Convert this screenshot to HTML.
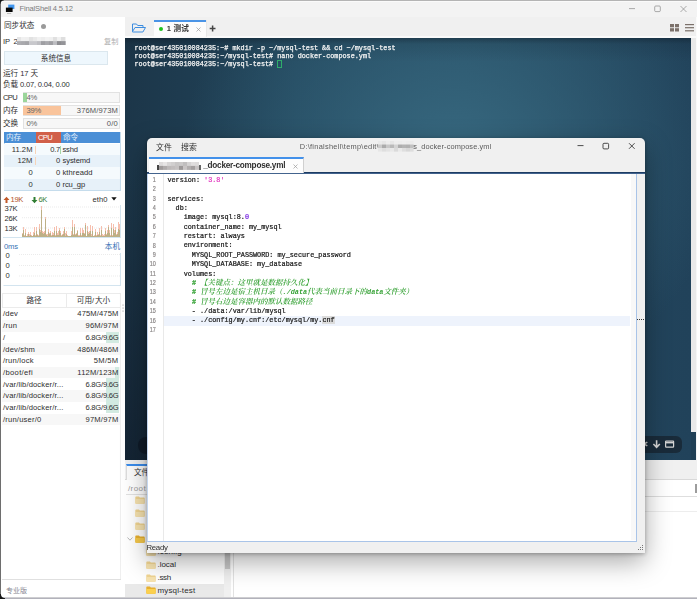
<!DOCTYPE html>
<html lang="zh-CN">
<head>
<meta charset="utf-8">
<title>FinalShell 4.5.12</title>
<style>
*{box-sizing:border-box;margin:0;padding:0}
html,body{width:697px;height:599px;overflow:hidden;background:#f0f0f0}
#app{position:absolute;left:0;top:0;width:697px;height:599px;overflow:hidden;filter:blur(0.3px)}
body{position:relative;font-family:"Liberation Sans","Noto Sans CJK SC",sans-serif;font-size:7.6px;color:#2e2e2e;line-height:1}
.a{position:absolute}
.t{position:absolute;white-space:nowrap;line-height:10px;height:10px;font-size:7.6px}
#term{left:125px;top:38px;width:566px;height:422px;overflow:hidden;background:
 linear-gradient(180deg,rgba(10,20,30,.4) 0,rgba(10,20,30,.12) 6px,rgba(10,20,30,0) 24px),
 radial-gradient(ellipse 270px 250px at 58% 28%, #37687f 0%, rgba(55,104,127,0) 100%),
 radial-gradient(ellipse 420px 300px at 0% 100%, rgba(16,28,42,.7) 0%, rgba(16,28,42,0) 100%),
 linear-gradient(90deg,#1c3649 0%,#22465c 30%,#254b62 60%,#21425a 100%);}
#term pre{position:absolute;left:9.5px;top:6.2px;font-family:"Liberation Mono",monospace;font-size:6.8px;line-height:8.05px;color:#f4f4f4;font-weight:normal;-webkit-text-stroke:0.25px #f4f4f4}
#dlg{left:147px;top:138px;width:498px;height:415px;background:#f0f0f0;border-radius:5px 5px 0 0;box-shadow:0 9px 26px rgba(0,0,0,.34),0 1px 4px rgba(0,0,0,.3)}
#ed{left:-0.3px;top:36.2px;width:490.3px;height:367.8px;background:#fff;border:1px solid #a9c4e8;border-top:0;border-left-color:#c3d6ef}
#code{position:absolute;left:19.7px;top:1.6px;font-family:"Liberation Mono",monospace;font-size:6.8px;line-height:9.375px;color:#1a1a1a;white-space:pre;-webkit-text-stroke:0.22px}
#code .ln{height:9.375px;line-height:9.375px;white-space:pre}
#code i{font-family:"Liberation Mono","Noto Serif CJK SC",serif;font-style:italic;font-weight:600;color:#36a236;font-size:7.5px;line-height:0;vertical-align:baseline;-webkit-text-stroke:0}
#code i b{font-family:"Liberation Mono",monospace;font-size:6.8px;font-weight:bold;font-style:italic}
#code .s{color:#e23ac0}
#code .n{color:#7a2be2}
#code .g{color:#36a236;font-weight:bold}
#code .h{background:#dcdcdc}
#nums{position:absolute;left:0;top:0.7px;width:7.7px;-webkit-text-stroke:0.2px #8a8686;text-align:right;font-family:"Liberation Sans",sans-serif;font-size:6.8px;line-height:9.375px;color:#8a8686;white-space:pre;transform:scaleX(.8);transform-origin:100% 0}
.bar{position:absolute;left:23px;width:97px;height:10.5px;background:#f7f7f7;border:1px solid #e2e2e2}
.prow{position:absolute;left:4px;width:116px;height:11.7px}
.drow{position:absolute;left:2px;width:118px;height:11.7px}
</style>
</head>
<body>
<div id="app">
<div class="a" style="left:0;top:0;width:697px;height:17px;background:#f3f3f3"></div>
<div class="a" style="left:0;top:0;width:697px;height:1px;background:#b4b4b4"></div>
<div class="a" style="left:0;top:1px;width:697px;height:1px;background:#fafafa"></div>
<svg class="a" style="left:5px;top:4px" width="11" height="11" viewBox="0 0 11 11"><rect x="3.2" y="0.6" width="6.2" height="4.4" fill="#3f95ee"/><rect x="0.9" y="3.6" width="6.7" height="4.4" fill="#050505"/><rect x="2" y="9" width="4.2" height="0.6" fill="#999"/></svg>
<svg class="a" style="left:625px;top:3px" width="66" height="12" viewBox="0 0 66 12" fill="none" stroke="#777" stroke-width="0.6"><path d="M4 5.6h6"/><rect x="29.7" y="3" width="5.6" height="5.6" rx="1"/><path d="M55.5 3l6 6M61.5 3l-6 6"/></svg>

<div class="t" style="top:3.5px;left:19.5px;color:#7c7c7c;"><span style="letter-spacing:-0.19px">FinalShell 4.5.12</span></div>
<div class="a" style="left:1px;top:17px;width:124px;height:582px;background:#fff"></div>
<div class="t" style="top:21px;left:4px;color:#333;">同步状态</div>
<div class="a" style="left:40.5px;top:23.5px;width:5px;height:5px;border-radius:50%;background:#9a9a9a"></div>
<div class="t" style="top:36.5px;left:3px;white-space:pre;"><span style="letter-spacing:-0.19px">IP  2</span></div>
<svg class="a" style="left:17.3px;top:36.5px;filter:blur(0.35px)" width="48.7" height="8.2" viewBox="0 0 48.7 8.2"><rect x="0.0" y="0.0" width="4.1" height="4.2" fill="rgb(229,229,229)"/><rect x="4.0" y="0.0" width="4.1" height="4.2" fill="rgb(240,240,240)"/><rect x="8.0" y="0.0" width="4.1" height="4.2" fill="rgb(239,239,239)"/><rect x="12.0" y="0.0" width="4.1" height="4.2" fill="rgb(226,226,226)"/><rect x="16.0" y="0.0" width="4.1" height="4.2" fill="rgb(233,233,233)"/><rect x="20.0" y="0.0" width="4.1" height="4.2" fill="rgb(241,241,241)"/><rect x="24.0" y="0.0" width="4.1" height="4.2" fill="rgb(237,237,237)"/><rect x="28.0" y="0.0" width="4.1" height="4.2" fill="rgb(242,242,242)"/><rect x="32.0" y="0.0" width="4.1" height="4.2" fill="rgb(240,240,240)"/><rect x="36.0" y="0.0" width="4.1" height="4.2" fill="rgb(224,224,224)"/><rect x="40.0" y="0.0" width="4.1" height="4.2" fill="rgb(241,241,241)"/><rect x="44.0" y="0.0" width="4.1" height="4.2" fill="rgb(222,222,222)"/><rect x="48.0" y="0.0" width="0.8" height="4.2" fill="rgb(237,237,237)"/><rect x="0.0" y="4.1" width="4.1" height="4.2" fill="rgb(173,173,177)"/><rect x="4.0" y="4.1" width="4.1" height="4.2" fill="rgb(169,169,173)"/><rect x="8.0" y="4.1" width="4.1" height="4.2" fill="rgb(164,164,168)"/><rect x="12.0" y="4.1" width="4.1" height="4.2" fill="rgb(200,200,204)"/><rect x="16.0" y="4.1" width="4.1" height="4.2" fill="rgb(200,200,204)"/><rect x="20.0" y="4.1" width="4.1" height="4.2" fill="rgb(190,190,194)"/><rect x="24.0" y="4.1" width="4.1" height="4.2" fill="rgb(159,159,163)"/><rect x="28.0" y="4.1" width="4.1" height="4.2" fill="rgb(169,169,173)"/><rect x="32.0" y="4.1" width="4.1" height="4.2" fill="rgb(159,159,163)"/><rect x="36.0" y="4.1" width="4.1" height="4.2" fill="rgb(189,189,193)"/><rect x="40.0" y="4.1" width="4.1" height="4.2" fill="rgb(141,141,145)"/><rect x="44.0" y="4.1" width="4.1" height="4.2" fill="rgb(148,148,152)"/><rect x="48.0" y="4.1" width="0.8" height="4.2" fill="rgb(160,160,164)"/></svg>
<div class="t" style="top:36.5px;left:90.5px;width:28px;text-align:right;font-size:7.2px;color:#b0b0b0;">复制</div>
<div class="a" style="left:4px;top:51px;width:104px;height:13.5px;background:#eef7fd;border:1px solid #dbe7ee"></div>
<div class="t" style="top:53.5px;left:4px;width:104px;text-align:center;">系统信息</div>
<div class="t" style="top:68.5px;left:3px;">运行<span style="letter-spacing:-0.08px"> 17 </span>天</div>
<div class="t" style="top:79.5px;left:3px;">负载<span style="letter-spacing:-0.21px"> 0.07, 0.04, 0.00</span></div>
<div class="t" style="top:92.5px;left:3px;"><span style="letter-spacing:-0.62px">CPU</span></div>
<div class="bar" style="top:92px"><div class="a" style="left:-0.7px;top:0;width:3.6px;height:8.5px;background:#9bd69b"></div></div>
<div class="t" style="top:92.5px;left:26.5px;color:#666;"><span style="letter-spacing:-0.33px">4%</span></div>
<div class="t" style="top:105.5px;left:3px;">内存</div>
<div class="bar" style="top:105px"><div class="a" style="left:-0.7px;top:0;width:37.7px;height:8.5px;background:#f9c49c"></div></div>
<div class="t" style="top:105.5px;left:26.5px;color:#666;"><span style="letter-spacing:-0.27px">39%</span></div>
<div class="t" style="top:105.5px;left:60px;width:58px;text-align:right;color:#555;"><span style="letter-spacing:0.12px">376M/973M</span></div>
<div class="t" style="top:118.5px;left:3px;">交换</div>
<div class="bar" style="top:118px"></div>
<div class="t" style="top:118.5px;left:26.5px;color:#666;"><span style="letter-spacing:-0.33px">0%</span></div>
<div class="t" style="top:118.5px;left:60px;width:58px;text-align:right;color:#555;"><span style="letter-spacing:0.20px">0/0</span></div>
<div class="a" style="left:3.5px;top:131.5px;width:117px;height:59.5px;border:1px solid #c5dcec;background:#fff"></div>
<div class="a" style="left:4px;top:132px;width:116px;height:11px;background:#4b8fd6"></div>
<div class="a" style="left:36px;top:132px;width:25px;height:11px;background:#d1604a"></div>
<div class="t" style="top:132.5px;left:6px;color:#e6f0fb;">内存</div>
<div class="t" style="top:132.5px;left:38px;color:#fff;"><span style="letter-spacing:-0.62px">CPU</span></div>
<div class="t" style="top:132.5px;left:63px;color:#e6f0fb;">命令</div>
<div class="a" style="left:4px;top:143.5px;width:116px;height:11.7px;background:#f5fafd"></div>
<div class="t" style="top:144.5px;left:4.5px;width:28px;text-align:right;"><span style="letter-spacing:0.04px">11.2M</span></div>
<div class="t" style="top:144.5px;left:34px;width:26px;text-align:right;"><span style="letter-spacing:-0.24px">0.7</span></div>
<div class="t" style="top:144.5px;left:62.5px;"><span style="letter-spacing:-0.21px">sshd</span></div>
<div class="a" style="left:4px;top:155.2px;width:116px;height:11.7px;background:#e7f1f9"></div>
<div class="t" style="top:156.0px;left:4.5px;width:28px;text-align:right;"><span style="letter-spacing:0.08px">12M</span></div>
<div class="t" style="top:156.0px;left:34px;width:26px;text-align:right;"><span style="letter-spacing:-0.13px">0</span></div>
<div class="t" style="top:156.0px;left:62.5px;"><span style="letter-spacing:-0.09px">systemd</span></div>
<div class="a" style="left:4px;top:166.9px;width:116px;height:11.7px;background:#f5fafd"></div>
<div class="t" style="top:168.0px;left:4.5px;width:28px;text-align:right;"><span style="letter-spacing:-0.13px">0</span></div>
<div class="t" style="top:168.0px;left:34px;width:26px;text-align:right;"><span style="letter-spacing:-0.13px">0</span></div>
<div class="t" style="top:168.0px;left:62.5px;"><span style="letter-spacing:0.06px">kthreadd</span></div>
<div class="a" style="left:4px;top:178.6px;width:116px;height:11.7px;background:#e7f1f9"></div>
<div class="t" style="top:179.5px;left:4.5px;width:28px;text-align:right;"><span style="letter-spacing:-0.13px">0</span></div>
<div class="t" style="top:179.5px;left:34px;width:26px;text-align:right;"><span style="letter-spacing:-0.13px">0</span></div>
<div class="t" style="top:179.5px;left:62.5px;"><span style="letter-spacing:-0.11px">rcu_gp</span></div>
<div class="a" style="left:35px;top:145.5px;width:1px;height:8px;background:#f5d3b8"></div>
<div class="a" style="left:35px;top:157px;width:1px;height:8px;background:#f5d3b8"></div>
<div class="a" style="left:60px;top:145.5px;width:1px;height:8px;background:#a6d6a6"></div>
<svg class="a" style="left:3px;top:195.5px" width="7" height="8" viewBox="0 0 7 8"><path d="M3.5 0.8L6.5 4H4.5V7H2.5V4H0.5Z" fill="#c25a2a"/></svg>
<div class="t" style="top:194.5px;left:10.5px;color:#b4532a;"><span style="letter-spacing:-0.31px">19K</span></div>
<svg class="a" style="left:31px;top:195.5px" width="7" height="8" viewBox="0 0 7 8"><path d="M3.5 7.2L6.5 4H4.5V1H2.5V4H0.5Z" fill="#2f7d32"/></svg>
<div class="t" style="top:194.5px;left:38.5px;color:#3a7d3a;"><span style="letter-spacing:-0.39px">6K</span></div>
<div class="t" style="top:194.5px;left:92.5px;"><span style="letter-spacing:0.04px">eth0</span></div>
<svg class="a" style="left:111px;top:197px" width="6" height="4" viewBox="0 0 6 4"><path d="M0.3 0.3H5.7L3 3.6Z" fill="#111"/></svg>
<svg class="a" style="left:3px;top:205px" width="118" height="33" viewBox="0 0 118 33"><rect x="0" y="32" width="117.5" height="1" fill="#d3e4ef"/><rect x="117" y="0" width="1" height="33" fill="#d3e4ef"/><line x1="19" y1="2" x2="117" y2="2" stroke="#cfcfcf" stroke-width="0.6" stroke-dasharray="0.7 1.3"/><line x1="19" y1="12.7" x2="117" y2="12.7" stroke="#cfcfcf" stroke-width="0.6" stroke-dasharray="0.7 1.3"/><line x1="19" y1="23" x2="117" y2="23" stroke="#cfcfcf" stroke-width="0.6" stroke-dasharray="0.7 1.3"/><rect x="19" y="28" width="1" height="4" fill="#f6bfae"/><rect x="19" y="29" width="1" height="3" fill="#bdb086"/><rect x="20" y="22" width="1" height="10" fill="#f6bfae"/><rect x="20" y="25" width="1" height="7" fill="#bdb086"/><rect x="21" y="30" width="1" height="2" fill="#f6bfae"/><rect x="21" y="31" width="1" height="1" fill="#bdb086"/><rect x="22" y="24" width="1" height="8" fill="#f6bfae"/><rect x="22" y="28" width="1" height="4" fill="#bdb086"/><rect x="23" y="31" width="1" height="1" fill="#f6bfae"/><rect x="23" y="31" width="1" height="1" fill="#bdb086"/><rect x="24" y="29" width="1" height="3" fill="#f6bfae"/><rect x="24" y="31" width="1" height="1" fill="#bdb086"/><rect x="25" y="27" width="1" height="5" fill="#f6bfae"/><rect x="25" y="29" width="1" height="3" fill="#bdb086"/><rect x="26" y="29" width="1" height="3" fill="#f6bfae"/><rect x="26" y="31" width="1" height="1" fill="#bdb086"/><rect x="27" y="27" width="1" height="5" fill="#f6bfae"/><rect x="27" y="30" width="1" height="2" fill="#bdb086"/><rect x="28" y="30" width="1" height="2" fill="#f6bfae"/><rect x="28" y="31" width="1" height="1" fill="#bdb086"/><rect x="29" y="31" width="1" height="1" fill="#f6bfae"/><rect x="29" y="31" width="1" height="1" fill="#bdb086"/><rect x="30" y="27" width="1" height="5" fill="#f6bfae"/><rect x="30" y="30" width="1" height="2" fill="#bdb086"/><rect x="31" y="22" width="1" height="10" fill="#f6bfae"/><rect x="31" y="28" width="1" height="4" fill="#bdb086"/><rect x="32" y="30" width="1" height="2" fill="#f6bfae"/><rect x="32" y="31" width="1" height="1" fill="#bdb086"/><rect x="33" y="22" width="1" height="10" fill="#f6bfae"/><rect x="33" y="26" width="1" height="6" fill="#bdb086"/><rect x="34" y="29" width="1" height="3" fill="#f6bfae"/><rect x="34" y="30" width="1" height="2" fill="#bdb086"/><rect x="35" y="30" width="1" height="2" fill="#f6bfae"/><rect x="35" y="31" width="1" height="1" fill="#bdb086"/><rect x="36" y="19" width="1" height="13" fill="#f6bfae"/><rect x="36" y="24" width="1" height="8" fill="#bdb086"/><rect x="37" y="25" width="1" height="7" fill="#f6bfae"/><rect x="37" y="27" width="1" height="5" fill="#bdb086"/><rect x="38" y="1" width="1" height="31" fill="#f6bfae"/><rect x="38" y="5" width="1" height="27" fill="#bdb086"/><rect x="39" y="26" width="1" height="6" fill="#f6bfae"/><rect x="39" y="28" width="1" height="4" fill="#bdb086"/><rect x="40" y="27" width="1" height="5" fill="#f6bfae"/><rect x="40" y="29" width="1" height="3" fill="#bdb086"/><rect x="41" y="26" width="1" height="6" fill="#f6bfae"/><rect x="41" y="28" width="1" height="4" fill="#bdb086"/><rect x="42" y="12" width="1" height="20" fill="#f6bfae"/><rect x="42" y="14" width="1" height="18" fill="#bdb086"/><rect x="43" y="29" width="1" height="3" fill="#f6bfae"/><rect x="43" y="30" width="1" height="2" fill="#bdb086"/><rect x="44" y="29" width="1" height="3" fill="#f6bfae"/><rect x="44" y="31" width="1" height="1" fill="#bdb086"/><rect x="45" y="24" width="1" height="8" fill="#f6bfae"/><rect x="45" y="27" width="1" height="5" fill="#bdb086"/><rect x="46" y="28" width="1" height="4" fill="#f6bfae"/><rect x="46" y="29" width="1" height="3" fill="#bdb086"/><rect x="47" y="26" width="1" height="6" fill="#f6bfae"/><rect x="47" y="28" width="1" height="4" fill="#bdb086"/><rect x="48" y="30" width="1" height="2" fill="#f6bfae"/><rect x="48" y="31" width="1" height="1" fill="#bdb086"/><rect x="49" y="27" width="1" height="5" fill="#f6bfae"/><rect x="49" y="30" width="1" height="2" fill="#bdb086"/><rect x="50" y="28" width="1" height="4" fill="#f6bfae"/><rect x="50" y="30" width="1" height="2" fill="#bdb086"/><rect x="51" y="22" width="1" height="10" fill="#f6bfae"/><rect x="51" y="26" width="1" height="6" fill="#bdb086"/><rect x="52" y="30" width="1" height="2" fill="#f6bfae"/><rect x="52" y="31" width="1" height="1" fill="#bdb086"/><rect x="53" y="21" width="1" height="11" fill="#f6bfae"/><rect x="53" y="26" width="1" height="6" fill="#bdb086"/><rect x="54" y="28" width="1" height="4" fill="#f6bfae"/><rect x="54" y="30" width="1" height="2" fill="#bdb086"/><rect x="55" y="26" width="1" height="6" fill="#f6bfae"/><rect x="55" y="30" width="1" height="2" fill="#bdb086"/><rect x="56" y="23" width="1" height="9" fill="#f6bfae"/><rect x="56" y="25" width="1" height="7" fill="#bdb086"/><rect x="57" y="26" width="1" height="6" fill="#f6bfae"/><rect x="57" y="28" width="1" height="4" fill="#bdb086"/><rect x="58" y="30" width="1" height="2" fill="#f6bfae"/><rect x="58" y="31" width="1" height="1" fill="#bdb086"/><rect x="59" y="29" width="1" height="3" fill="#f6bfae"/><rect x="59" y="30" width="1" height="2" fill="#bdb086"/><rect x="60" y="26" width="1" height="6" fill="#f6bfae"/><rect x="60" y="29" width="1" height="3" fill="#bdb086"/><rect x="61" y="22" width="1" height="10" fill="#f6bfae"/><rect x="61" y="24" width="1" height="8" fill="#bdb086"/><rect x="62" y="28" width="1" height="4" fill="#f6bfae"/><rect x="62" y="31" width="1" height="1" fill="#bdb086"/><rect x="63" y="26" width="1" height="6" fill="#f6bfae"/><rect x="63" y="29" width="1" height="3" fill="#bdb086"/><rect x="64" y="30" width="1" height="2" fill="#f6bfae"/><rect x="64" y="31" width="1" height="1" fill="#bdb086"/><rect x="65" y="31" width="1" height="1" fill="#f6bfae"/><rect x="65" y="31" width="1" height="1" fill="#bdb086"/><rect x="66" y="31" width="1" height="1" fill="#f6bfae"/><rect x="66" y="31" width="1" height="1" fill="#bdb086"/><rect x="67" y="31" width="1" height="1" fill="#f6bfae"/><rect x="67" y="31" width="1" height="1" fill="#bdb086"/><rect x="68" y="26" width="1" height="6" fill="#f6bfae"/><rect x="68" y="30" width="1" height="2" fill="#bdb086"/><rect x="69" y="15" width="1" height="17" fill="#f6bfae"/><rect x="69" y="22" width="1" height="10" fill="#bdb086"/><rect x="70" y="29" width="1" height="3" fill="#f6bfae"/><rect x="70" y="30" width="1" height="2" fill="#bdb086"/><rect x="71" y="19" width="1" height="13" fill="#f6bfae"/><rect x="71" y="22" width="1" height="10" fill="#bdb086"/><rect x="72" y="29" width="1" height="3" fill="#f6bfae"/><rect x="72" y="30" width="1" height="2" fill="#bdb086"/><rect x="73" y="28" width="1" height="4" fill="#f6bfae"/><rect x="73" y="29" width="1" height="3" fill="#bdb086"/><rect x="74" y="25" width="1" height="7" fill="#f6bfae"/><rect x="74" y="26" width="1" height="6" fill="#bdb086"/><rect x="75" y="30" width="1" height="2" fill="#f6bfae"/><rect x="75" y="31" width="1" height="1" fill="#bdb086"/><rect x="76" y="30" width="1" height="2" fill="#f6bfae"/><rect x="76" y="31" width="1" height="1" fill="#bdb086"/><rect x="77" y="23" width="1" height="9" fill="#f6bfae"/><rect x="77" y="28" width="1" height="4" fill="#bdb086"/><rect x="78" y="30" width="1" height="2" fill="#f6bfae"/><rect x="78" y="31" width="1" height="1" fill="#bdb086"/><rect x="79" y="23" width="1" height="9" fill="#f6bfae"/><rect x="79" y="28" width="1" height="4" fill="#bdb086"/><rect x="80" y="25" width="1" height="7" fill="#f6bfae"/><rect x="80" y="28" width="1" height="4" fill="#bdb086"/><rect x="81" y="28" width="1" height="4" fill="#f6bfae"/><rect x="81" y="29" width="1" height="3" fill="#bdb086"/><rect x="82" y="18" width="1" height="14" fill="#f6bfae"/><rect x="82" y="20" width="1" height="12" fill="#bdb086"/><rect x="83" y="31" width="1" height="1" fill="#f6bfae"/><rect x="83" y="31" width="1" height="1" fill="#bdb086"/><rect x="84" y="21" width="1" height="11" fill="#f6bfae"/><rect x="84" y="26" width="1" height="6" fill="#bdb086"/><rect x="85" y="27" width="1" height="5" fill="#f6bfae"/><rect x="85" y="29" width="1" height="3" fill="#bdb086"/><rect x="86" y="26" width="1" height="6" fill="#f6bfae"/><rect x="86" y="28" width="1" height="4" fill="#bdb086"/><rect x="87" y="20" width="1" height="12" fill="#f6bfae"/><rect x="87" y="26" width="1" height="6" fill="#bdb086"/><rect x="88" y="29" width="1" height="3" fill="#f6bfae"/><rect x="88" y="31" width="1" height="1" fill="#bdb086"/><rect x="89" y="21" width="1" height="11" fill="#f6bfae"/><rect x="89" y="26" width="1" height="6" fill="#bdb086"/><rect x="90" y="31" width="1" height="1" fill="#f6bfae"/><rect x="90" y="31" width="1" height="1" fill="#bdb086"/><rect x="91" y="30" width="1" height="2" fill="#f6bfae"/><rect x="91" y="31" width="1" height="1" fill="#bdb086"/><rect x="92" y="24" width="1" height="8" fill="#f6bfae"/><rect x="92" y="27" width="1" height="5" fill="#bdb086"/><rect x="93" y="30" width="1" height="2" fill="#f6bfae"/><rect x="93" y="31" width="1" height="1" fill="#bdb086"/><rect x="94" y="27" width="1" height="5" fill="#f6bfae"/><rect x="94" y="30" width="1" height="2" fill="#bdb086"/><rect x="95" y="29" width="1" height="3" fill="#f6bfae"/><rect x="95" y="30" width="1" height="2" fill="#bdb086"/><rect x="96" y="23" width="1" height="9" fill="#f6bfae"/><rect x="96" y="27" width="1" height="5" fill="#bdb086"/><rect x="97" y="30" width="1" height="2" fill="#f6bfae"/><rect x="97" y="31" width="1" height="1" fill="#bdb086"/><rect x="98" y="21" width="1" height="11" fill="#f6bfae"/><rect x="98" y="25" width="1" height="7" fill="#bdb086"/><rect x="99" y="29" width="1" height="3" fill="#f6bfae"/><rect x="99" y="31" width="1" height="1" fill="#bdb086"/><rect x="100" y="30" width="1" height="2" fill="#f6bfae"/><rect x="100" y="31" width="1" height="1" fill="#bdb086"/><rect x="101" y="29" width="1" height="3" fill="#f6bfae"/><rect x="101" y="31" width="1" height="1" fill="#bdb086"/><rect x="102" y="23" width="1" height="9" fill="#f6bfae"/><rect x="102" y="26" width="1" height="6" fill="#bdb086"/><rect x="103" y="29" width="1" height="3" fill="#f6bfae"/><rect x="103" y="30" width="1" height="2" fill="#bdb086"/><rect x="104" y="25" width="1" height="7" fill="#f6bfae"/><rect x="104" y="28" width="1" height="4" fill="#bdb086"/><rect x="105" y="20" width="1" height="12" fill="#f6bfae"/><rect x="105" y="22" width="1" height="10" fill="#bdb086"/><rect x="106" y="25" width="1" height="7" fill="#f6bfae"/><rect x="106" y="28" width="1" height="4" fill="#bdb086"/><rect x="107" y="30" width="1" height="2" fill="#f6bfae"/><rect x="107" y="31" width="1" height="1" fill="#bdb086"/><rect x="108" y="18" width="1" height="14" fill="#f6bfae"/><rect x="108" y="23" width="1" height="9" fill="#bdb086"/><rect x="109" y="30" width="1" height="2" fill="#f6bfae"/><rect x="109" y="31" width="1" height="1" fill="#bdb086"/><rect x="110" y="19" width="1" height="13" fill="#f6bfae"/><rect x="110" y="24" width="1" height="8" fill="#bdb086"/><rect x="111" y="25" width="1" height="7" fill="#f6bfae"/><rect x="111" y="28" width="1" height="4" fill="#bdb086"/><rect x="112" y="22" width="1" height="10" fill="#f6bfae"/><rect x="112" y="25" width="1" height="7" fill="#bdb086"/><rect x="113" y="29" width="1" height="3" fill="#f6bfae"/><rect x="113" y="30" width="1" height="2" fill="#bdb086"/><rect x="114" y="27" width="1" height="5" fill="#f6bfae"/><rect x="114" y="29" width="1" height="3" fill="#bdb086"/><rect x="115" y="17" width="1" height="15" fill="#f6bfae"/><rect x="115" y="24" width="1" height="8" fill="#bdb086"/><rect x="116" y="19" width="1" height="13" fill="#f6bfae"/><rect x="116" y="25" width="1" height="7" fill="#bdb086"/></svg>
<div class="t" style="top:204px;left:4.6px;"><span style="letter-spacing:-0.31px">37K</span></div>
<div class="t" style="top:213.5px;left:4.6px;"><span style="letter-spacing:-0.31px">26K</span></div>
<div class="t" style="top:224px;left:4.6px;"><span style="letter-spacing:-0.31px">13K</span></div>
<div class="t" style="top:242px;left:4px;color:#3672b4;"><span style="letter-spacing:-0.16px">0ms</span></div>
<div class="t" style="top:242px;left:90px;width:30px;text-align:right;color:#3672b4;">本机</div>
<svg class="a" style="left:3px;top:250px" width="118" height="36" viewBox="0 0 118 36"><rect x="0.5" y="35" width="117" height="1" fill="#d3e4ef"/><rect x="117" y="3" width="1" height="33" fill="#d3e4ef"/><g stroke="#cfcfcf" stroke-width="0.6" stroke-dasharray="0.7 1.3"><line x1="16" y1="4.5" x2="117" y2="4.5"/><line x1="16" y1="15.5" x2="117" y2="15.5"/><line x1="16" y1="26" x2="117" y2="26"/></g></svg>
<div class="t" style="top:251px;left:5.5px;"><span style="letter-spacing:-0.13px">0</span></div>
<div class="t" style="top:260.5px;left:5.5px;"><span style="letter-spacing:-0.13px">0</span></div>
<div class="t" style="top:270.5px;left:5.5px;"><span style="letter-spacing:-0.13px">0</span></div>
<div class="a" style="left:2px;top:292.5px;width:118.5px;height:15px;background:#fff;border:1px solid #ebebeb"></div>
<div class="a" style="left:66px;top:293px;width:1px;height:14px;background:#ebebeb"></div>
<div class="t" style="top:295.5px;left:2px;width:64px;text-align:center;color:#333;">路径</div>
<div class="t" style="top:295.5px;left:67px;width:53px;text-align:center;color:#333;">可用<span style="letter-spacing:0.85px">/</span>大小</div>
<div class="a" style="left:2px;top:308.2px;width:117.5px;height:11.7px;background:#fff"></div>
<div class="t" style="top:309.0px;left:3px;"><span style="letter-spacing:0.17px">/dev</span></div>
<div class="t" style="top:309.0px;left:52.5px;width:66px;text-align:right;"><span style="letter-spacing:0.12px">475M/475M</span></div>
<div class="a" style="left:2px;top:319.9px;width:117.5px;height:11.7px;background:#f7f7f7"></div>
<div class="t" style="top:321.0px;left:3px;"><span style="letter-spacing:0.28px">/run</span></div>
<div class="t" style="top:321.0px;left:52.5px;width:66px;text-align:right;"><span style="letter-spacing:0.19px">96M/97M</span></div>
<div class="a" style="left:2px;top:331.6px;width:117.5px;height:11.7px;background:#fff"></div>
<div class="a" style="left:106.3px;top:331.6px;width:13px;height:11.7px;background:#d2eae1"></div>
<div class="t" style="top:332.5px;left:3px;"><span style="letter-spacing:0.85px">/</span></div>
<div class="t" style="top:332.5px;left:52.5px;width:66px;text-align:right;"><span style="letter-spacing:-0.22px">6.8G/9.6G</span></div>
<div class="a" style="left:2px;top:343.3px;width:117.5px;height:11.7px;background:#f7f7f7"></div>
<div class="t" style="top:344.5px;left:3px;"><span style="letter-spacing:0.16px">/dev/shm</span></div>
<div class="t" style="top:344.5px;left:52.5px;width:66px;text-align:right;"><span style="letter-spacing:0.12px">486M/486M</span></div>
<div class="a" style="left:2px;top:355.0px;width:117.5px;height:11.7px;background:#fff"></div>
<div class="t" style="top:356.0px;left:3px;"><span style="letter-spacing:0.23px">/run/lock</span></div>
<div class="t" style="top:356.0px;left:52.5px;width:66px;text-align:right;"><span style="letter-spacing:0.32px">5M/5M</span></div>
<div class="a" style="left:2px;top:366.7px;width:117.5px;height:11.7px;background:#f7f7f7"></div>
<div class="a" style="left:115.3px;top:366.7px;width:4px;height:11.7px;background:#d2eae1"></div>
<div class="t" style="top:367.5px;left:3px;"><span style="letter-spacing:0.34px">/boot/efi</span></div>
<div class="t" style="top:367.5px;left:52.5px;width:66px;text-align:right;"><span style="letter-spacing:0.18px">112M/123M</span></div>
<div class="a" style="left:2px;top:378.4px;width:117.5px;height:11.7px;background:#fff"></div>
<div class="a" style="left:106.3px;top:378.4px;width:13px;height:11.7px;background:#d2eae1"></div>
<div class="t" style="top:379.5px;left:3px;"><span style="letter-spacing:0.13px">/var/lib/docker/r...</span></div>
<div class="t" style="top:379.5px;left:52.5px;width:66px;text-align:right;"><span style="letter-spacing:-0.22px">6.8G/9.6G</span></div>
<div class="a" style="left:2px;top:390.1px;width:117.5px;height:11.7px;background:#f7f7f7"></div>
<div class="a" style="left:106.3px;top:390.1px;width:13px;height:11.7px;background:#d2eae1"></div>
<div class="t" style="top:391.0px;left:3px;"><span style="letter-spacing:0.13px">/var/lib/docker/r...</span></div>
<div class="t" style="top:391.0px;left:52.5px;width:66px;text-align:right;"><span style="letter-spacing:-0.22px">6.8G/9.6G</span></div>
<div class="a" style="left:2px;top:401.8px;width:117.5px;height:11.7px;background:#fff"></div>
<div class="a" style="left:106.3px;top:401.8px;width:13px;height:11.7px;background:#d2eae1"></div>
<div class="t" style="top:403.0px;left:3px;"><span style="letter-spacing:0.13px">/var/lib/docker/r...</span></div>
<div class="t" style="top:403.0px;left:52.5px;width:66px;text-align:right;"><span style="letter-spacing:-0.22px">6.8G/9.6G</span></div>
<div class="a" style="left:2px;top:413.5px;width:117.5px;height:11.7px;background:#f7f7f7"></div>
<div class="t" style="top:414.5px;left:3px;"><span style="letter-spacing:0.19px">/run/user/0</span></div>
<div class="t" style="top:414.5px;left:52.5px;width:66px;text-align:right;"><span style="letter-spacing:0.19px">97M/97M</span></div>
<svg class="a" style="left:122px;top:304px" width="2" height="8" viewBox="0 0 2 8" fill="#c4c4c4"><rect x="0.3" y="0.5" width="1.5" height="1.2"/><rect x="0.3" y="3.5" width="1.5" height="1.2"/><rect x="0.3" y="6.5" width="1.5" height="1.2"/></svg>
<div class="a" style="left:2px;top:578.5px;width:118.5px;height:1px;background:#e0e0e0"></div>
<div class="a" style="left:120px;top:307px;width:1px;height:272px;background:#efefef"></div>
<div class="t" style="top:586px;left:6px;font-size:7px;color:#85858f;">专业版</div>
<div class="a" style="left:125px;top:17px;width:572px;height:21px;background:#f0f0f0"></div>
<div class="a" style="left:125px;top:35.5px;width:572px;height:2.5px;background:#fafafa"></div>
<svg class="a" style="left:131px;top:22px" width="16" height="12" viewBox="0 0 16 12" fill="none" stroke="#3d8de0" stroke-width="1" stroke-linejoin="round"><path d="M1.5 9.5V2h4l1.2 1.5h5.3v2"/><path d="M1.5 9.5l2.5-4h10.5l-2.6 4.5H1.5z"/></svg>
<div class="a" style="left:154px;top:20px;width:52px;height:16.5px;background:#fcfcfc;border-top:2px solid #4a94e6;box-shadow:0.5px 0 0 #ddd"></div>
<div class="a" style="left:158.8px;top:26.6px;width:4.6px;height:4.6px;border-radius:50%;background:#1ec21e"></div>
<div class="t" style="top:23.5px;left:166.8px;color:#333;font-weight:bold;"><span style="letter-spacing:-0.13px">1</span></div>
<div class="t" style="top:23.5px;left:173.6px;color:#333;font-weight:bold;">测试</div>
<svg class="a" style="left:196px;top:26.5px" width="5" height="5" viewBox="0 0 5 5" stroke="#999" stroke-width="0.7"><path d="M0.5 0.5l4 4M4.5 0.5l-4 4"/></svg>
<svg class="a" style="left:209px;top:25px" width="7" height="7" viewBox="0 0 7 7" stroke="#444" stroke-width="1.5"><path d="M3.6 0.6v5.8M0.7 3.5h5.8"/></svg>
<svg class="a" style="left:670px;top:22.5px" width="25" height="10" viewBox="0 0 25 10"><g fill="#7b706a"><rect x="0" y="1" width="4" height="3.3"/><rect x="5" y="1" width="4" height="3.3"/><rect x="0" y="5.2" width="4" height="3.3"/><rect x="5" y="5.2" width="4" height="3.3"/><rect x="15" y="1" width="9" height="1.2"/><rect x="15" y="4.1" width="9" height="1.2"/><rect x="15" y="7.2" width="9" height="1.2"/></g></svg>
<div class="a" id="term"><pre>root@ser435010084235:~# mkdir -p ~/mysql-test &amp;&amp; cd ~/mysql-test
root@ser435010084235:~/mysql-test# nano docker-compose.yml
root@ser435010084235:~/mysql-test# </pre>
<div class="a" style="left:152.4px;top:22.3px;width:4.4px;height:8px;border:1px solid #2fae6a"></div>
<div class="a" style="left:13px;top:398.5px;width:30px;height:17px;border-radius:8px;background:rgba(14,24,36,.8)"></div>
<div class="a" style="left:511px;top:397.8px;width:46.2px;height:17px;border-radius:6px;background:rgba(24,40,54,.88)"></div>
<svg class="a" style="left:516px;top:400.3px" width="36" height="12" viewBox="0 0 36 12" fill="none" stroke="#d4d4d4" stroke-width="1.2"><path d="M3 2.2v7.6M-0.3 4.1l6.6 3.8M-0.3 7.9l6.6-3.8" stroke-width="1.5"/><path d="M15.6 2.3v6.6M12.4 6l3.2 3.3 3.2-3.3" stroke-width="1.6"/><rect x="24.6" y="3" width="8" height="6.2" rx="0.6"/><path d="M24.6 4.5h8" stroke-width="1.8"/></svg>
</div>
<div class="a" style="left:691px;top:38px;width:6px;height:422px;background:#1f3f55"></div>
<div class="a" style="left:690.5px;top:38px;width:5.5px;height:394px;background:#e9e9e9"></div>
<div class="a" style="left:696px;top:17px;width:1px;height:582px;background:linear-gradient(#fbfbfb 0,#f4f4f4 75%,#b9bccb 90%,#6a6f93 100%)"></div>
<div class="a" style="left:125px;top:460px;width:572px;height:139px;background:#fff"></div>
<div class="a" style="left:125px;top:460px;width:572px;height:19.5px;background:#f0f0f0;border-bottom:1px solid #d9d9d9"></div>
<div class="a" style="left:125.5px;top:463.6px;width:40px;height:16px;background:#fcfcfc;border-top:2px solid #3a8cec;border-left:1px solid #ddd"></div>
<div class="t" style="top:467.5px;left:134px;color:#333;">文件</div>
<div class="t" style="top:483.5px;left:128px;font-size:8px;color:#9c9c9c;"><span style="letter-spacing:0.40px">/root</span></div>
<div class="a" style="left:126px;top:493.5px;width:100px;height:1px;background:#e2e2e2"></div>
<div class="a" style="left:233px;top:479px;width:1px;height:120px;background:#e2e2e2"></div>
<div class="a" style="left:233px;top:496px;width:464px;height:1px;background:#dedede"></div>
<div class="a" style="left:233px;top:510.5px;width:464px;height:1px;background:#ededed"></div>
<div class="a" style="left:695px;top:483.5px;width:2px;height:9px;background:#9c9c9c"></div>
<div class="a" style="left:224px;top:494px;width:7px;height:105px;background:#f0f0f0"></div>
<div class="a" style="left:224.5px;top:540px;width:5.5px;height:29px;background:#c9c9c9"></div>
<svg class="a" style="left:135px;top:496.3px" width="10" height="8" viewBox="0 0 10 8"><path d="M0.3 1.2a0.8 0.8 0 0 1 0.8-0.8h2.8l1 1h4a0.8 0.8 0 0 1 0.8 0.8v4.8a0.8 0.8 0 0 1-0.8 0.8h-7.8a0.8 0.8 0 0 1-0.8-0.8z" fill="#f1d592"/><path d="M0.3 3h9.4v4a0.8 0.8 0 0 1-0.8 0.8h-7.8a0.8 0.8 0 0 1-0.8-0.8z" fill="#f8e4b0"/></svg>
<svg class="a" style="left:135px;top:509px" width="10" height="8" viewBox="0 0 10 8"><path d="M0.3 1.2a0.8 0.8 0 0 1 0.8-0.8h2.8l1 1h4a0.8 0.8 0 0 1 0.8 0.8v4.8a0.8 0.8 0 0 1-0.8 0.8h-7.8a0.8 0.8 0 0 1-0.8-0.8z" fill="#f1d592"/><path d="M0.3 3h9.4v4a0.8 0.8 0 0 1-0.8 0.8h-7.8a0.8 0.8 0 0 1-0.8-0.8z" fill="#f8e4b0"/></svg>
<svg class="a" style="left:135px;top:521.6px" width="10" height="8" viewBox="0 0 10 8"><path d="M0.3 1.2a0.8 0.8 0 0 1 0.8-0.8h2.8l1 1h4a0.8 0.8 0 0 1 0.8 0.8v4.8a0.8 0.8 0 0 1-0.8 0.8h-7.8a0.8 0.8 0 0 1-0.8-0.8z" fill="#f1d592"/><path d="M0.3 3h9.4v4a0.8 0.8 0 0 1-0.8 0.8h-7.8a0.8 0.8 0 0 1-0.8-0.8z" fill="#f8e4b0"/></svg>
<svg class="a" style="left:135px;top:534.5px" width="10" height="8" viewBox="0 0 10 8"><path d="M0.3 1.2a0.8 0.8 0 0 1 0.8-0.8h2.8l1 1h4a0.8 0.8 0 0 1 0.8 0.8v4.8a0.8 0.8 0 0 1-0.8 0.8h-7.8a0.8 0.8 0 0 1-0.8-0.8z" fill="#e8b030"/><path d="M0.3 3h9.4v4a0.8 0.8 0 0 1-0.8 0.8h-7.8a0.8 0.8 0 0 1-0.8-0.8z" fill="#f6c94a"/></svg>
<svg class="a" style="left:126.5px;top:537px" width="6" height="4" viewBox="0 0 6 4" fill="none" stroke="#999" stroke-width="0.7"><path d="M0.5 0.5l2.5 2.7 2.5-2.7"/></svg>
<svg class="a" style="left:145.7px;top:548.0px" width="10" height="8" viewBox="0 0 10 8"><path d="M0.3 1.2a0.8 0.8 0 0 1 0.8-0.8h2.8l1 1h4a0.8 0.8 0 0 1 0.8 0.8v4.8a0.8 0.8 0 0 1-0.8 0.8h-7.8a0.8 0.8 0 0 1-0.8-0.8z" fill="#f1d592"/><path d="M0.3 3h9.4v4a0.8 0.8 0 0 1-0.8 0.8h-7.8a0.8 0.8 0 0 1-0.8-0.8z" fill="#f8e4b0"/></svg>
<div class="t" style="top:547.2px;left:157.5px;font-size:8px;"><span style="letter-spacing:0.10px">.config</span></div>
<svg class="a" style="left:145.7px;top:560.8px" width="10" height="8" viewBox="0 0 10 8"><path d="M0.3 1.2a0.8 0.8 0 0 1 0.8-0.8h2.8l1 1h4a0.8 0.8 0 0 1 0.8 0.8v4.8a0.8 0.8 0 0 1-0.8 0.8h-7.8a0.8 0.8 0 0 1-0.8-0.8z" fill="#f1d592"/><path d="M0.3 3h9.4v4a0.8 0.8 0 0 1-0.8 0.8h-7.8a0.8 0.8 0 0 1-0.8-0.8z" fill="#f8e4b0"/></svg>
<div class="t" style="top:560px;left:157.5px;font-size:8px;"><span style="letter-spacing:-0.04px">.local</span></div>
<svg class="a" style="left:145.7px;top:573.5999999999999px" width="10" height="8" viewBox="0 0 10 8"><path d="M0.3 1.2a0.8 0.8 0 0 1 0.8-0.8h2.8l1 1h4a0.8 0.8 0 0 1 0.8 0.8v4.8a0.8 0.8 0 0 1-0.8 0.8h-7.8a0.8 0.8 0 0 1-0.8-0.8z" fill="#f1d592"/><path d="M0.3 3h9.4v4a0.8 0.8 0 0 1-0.8 0.8h-7.8a0.8 0.8 0 0 1-0.8-0.8z" fill="#f8e4b0"/></svg>
<div class="t" style="top:572.8px;left:157.5px;font-size:8px;"><span style="letter-spacing:-0.34px">.ssh</span></div>
<div class="a" style="left:125px;top:584.4px;width:99px;height:13px;background:#e9e9e9"></div>
<svg class="a" style="left:145.7px;top:586.4px" width="10" height="8" viewBox="0 0 10 8"><path d="M0.3 1.2a0.8 0.8 0 0 1 0.8-0.8h2.8l1 1h4a0.8 0.8 0 0 1 0.8 0.8v4.8a0.8 0.8 0 0 1-0.8 0.8h-7.8a0.8 0.8 0 0 1-0.8-0.8z" fill="#e8b030"/><path d="M0.3 3h9.4v4a0.8 0.8 0 0 1-0.8 0.8h-7.8a0.8 0.8 0 0 1-0.8-0.8z" fill="#fbd04e"/></svg>
<div class="t" style="top:585.6px;left:157.5px;font-size:8px;"><span style="letter-spacing:0.13px">mysql-test</span></div>
<div class="a" style="left:0;top:597.4px;width:697px;height:1.6px;background:linear-gradient(#dcdcdc,#a4a4b0)"></div>
<div class="a" style="left:0;top:0;width:1px;height:599px;background:#6e6e6e"></div>
<div class="a" style="left:0;top:0;width:4px;height:4px;background:radial-gradient(circle at 100% 100%,rgba(0,0,0,0) 3.2px,#161616 4px)"></div>
<div class="a" style="left:0;top:594px;width:5px;height:5px;background:radial-gradient(circle at 100% 0,rgba(0,0,0,0) 3.6px,#161616 4.6px)"></div>
<div class="a" id="dlg">
<div class="t" style="top:4.5px;left:9px;font-size:7.9px;">文件</div>
<div class="t" style="top:4.5px;left:34px;font-size:7.9px;">搜索</div>
<div class="t" style="top:4px;left:152.8px;font-size:7.4px;color:#5a5a5a;"><span style="letter-spacing:0.27px">D:\finalshell\temp\edit\</span></div>
<svg class="a" style="left:231px;top:3px;filter:blur(0.35px)" width="35.5" height="10.5" viewBox="0 0 35.5 10.5"><rect x="0.0" y="0.0" width="4.1" height="3.6" fill="rgb(234,234,234)"/><rect x="4.0" y="0.0" width="4.1" height="3.6" fill="rgb(229,229,229)"/><rect x="8.0" y="0.0" width="4.1" height="3.6" fill="rgb(236,236,236)"/><rect x="12.0" y="0.0" width="4.1" height="3.6" fill="rgb(230,230,230)"/><rect x="16.0" y="0.0" width="4.1" height="3.6" fill="rgb(237,237,237)"/><rect x="20.0" y="0.0" width="4.1" height="3.6" fill="rgb(236,236,236)"/><rect x="24.0" y="0.0" width="4.1" height="3.6" fill="rgb(238,238,238)"/><rect x="28.0" y="0.0" width="4.1" height="3.6" fill="rgb(236,236,236)"/><rect x="32.0" y="0.0" width="3.6" height="3.6" fill="rgb(235,235,235)"/><rect x="0.0" y="3.5" width="4.1" height="3.6" fill="rgb(203,203,203)"/><rect x="4.0" y="3.5" width="4.1" height="3.6" fill="rgb(171,171,171)"/><rect x="8.0" y="3.5" width="4.1" height="3.6" fill="rgb(199,199,199)"/><rect x="12.0" y="3.5" width="4.1" height="3.6" fill="rgb(185,185,185)"/><rect x="16.0" y="3.5" width="4.1" height="3.6" fill="rgb(211,211,211)"/><rect x="20.0" y="3.5" width="4.1" height="3.6" fill="rgb(173,173,173)"/><rect x="24.0" y="3.5" width="4.1" height="3.6" fill="rgb(180,180,180)"/><rect x="28.0" y="3.5" width="4.1" height="3.6" fill="rgb(177,177,177)"/><rect x="32.0" y="3.5" width="3.6" height="3.6" fill="rgb(193,193,193)"/><rect x="0.0" y="7.0" width="4.1" height="3.6" fill="rgb(230,230,230)"/><rect x="4.0" y="7.0" width="4.1" height="3.6" fill="rgb(222,222,222)"/><rect x="8.0" y="7.0" width="4.1" height="3.6" fill="rgb(227,227,227)"/><rect x="12.0" y="7.0" width="4.1" height="3.6" fill="rgb(232,232,232)"/><rect x="16.0" y="7.0" width="4.1" height="3.6" fill="rgb(218,218,218)"/><rect x="20.0" y="7.0" width="4.1" height="3.6" fill="rgb(233,233,233)"/><rect x="24.0" y="7.0" width="4.1" height="3.6" fill="rgb(222,222,222)"/><rect x="28.0" y="7.0" width="4.1" height="3.6" fill="rgb(215,215,215)"/><rect x="32.0" y="7.0" width="3.6" height="3.6" fill="rgb(221,221,221)"/></svg>
<div class="t" style="top:4px;left:266.2px;font-size:7.4px;color:#5a5a5a;"><span style="letter-spacing:0.11px">s_docker-compose.yml</span></div>
<svg class="a" style="left:429px;top:3px" width="62" height="12" viewBox="0 0 62 12" fill="none" stroke="#222" stroke-width="0.8"><path d="M1.5 4.6h6"/><rect x="27" y="2.3" width="5.6" height="5.6" rx="1"/><path d="M53 2.2l5.6 5.6M58.6 2.2l-5.6 5.6"/></svg>
<div class="a" style="left:0;top:34.4px;width:498px;height:1.9px;background:linear-gradient(#1d3c63 0,#1d3c63 60%,#7fa3d4 100%)"></div>
<div class="a" style="left:1.5px;top:19px;width:155.5px;height:15.5px;background:#fdfdfd;border-top:2px solid #4391ea;border-right:1px solid #d0d0d0"></div>
<svg class="a" style="left:11.6px;top:23.9px;filter:blur(0.35px)" width="40.5" height="7.8" viewBox="0 0 40.5 7.8"><rect x="0.0" y="0.0" width="4.1" height="4.0" fill="rgb(221,219,219)"/><rect x="4.0" y="0.0" width="4.1" height="4.0" fill="rgb(231,229,229)"/><rect x="8.0" y="0.0" width="4.1" height="4.0" fill="rgb(215,213,213)"/><rect x="12.0" y="0.0" width="4.1" height="4.0" fill="rgb(209,207,207)"/><rect x="16.0" y="0.0" width="4.1" height="4.0" fill="rgb(200,198,198)"/><rect x="20.0" y="0.0" width="4.1" height="4.0" fill="rgb(203,201,201)"/><rect x="24.0" y="0.0" width="4.1" height="4.0" fill="rgb(192,190,190)"/><rect x="28.0" y="0.0" width="4.1" height="4.0" fill="rgb(213,211,211)"/><rect x="32.0" y="0.0" width="4.1" height="4.0" fill="rgb(224,222,222)"/><rect x="36.0" y="0.0" width="4.1" height="4.0" fill="rgb(221,219,219)"/><rect x="40.0" y="0.0" width="0.6" height="4.0" fill="rgb(230,228,228)"/><rect x="0.0" y="3.9" width="4.1" height="4.0" fill="rgb(159,155,155)"/><rect x="4.0" y="3.9" width="4.1" height="4.0" fill="rgb(175,171,171)"/><rect x="8.0" y="3.9" width="4.1" height="4.0" fill="rgb(189,185,185)"/><rect x="12.0" y="3.9" width="4.1" height="4.0" fill="rgb(193,189,189)"/><rect x="16.0" y="3.9" width="4.1" height="4.0" fill="rgb(198,194,194)"/><rect x="20.0" y="3.9" width="4.1" height="4.0" fill="rgb(156,152,152)"/><rect x="24.0" y="3.9" width="4.1" height="4.0" fill="rgb(200,196,196)"/><rect x="28.0" y="3.9" width="4.1" height="4.0" fill="rgb(178,174,174)"/><rect x="32.0" y="3.9" width="4.1" height="4.0" fill="rgb(164,160,160)"/><rect x="36.0" y="3.9" width="4.1" height="4.0" fill="rgb(199,195,195)"/><rect x="40.0" y="3.9" width="0.6" height="4.0" fill="rgb(182,178,178)"/></svg>
<div class="a" style="left:9.6px;top:26.5px;width:2.2px;height:5px;background:#444;filter:blur(0.5px)"></div>
<div class="a" style="left:51.6px;top:27px;width:2px;height:4.5px;background:#666;filter:blur(0.5px)"></div>
<div class="t" style="top:22.5px;left:56.2px;font-size:8.2px;font-weight:bold;"><span style="letter-spacing:-0.23px">_docker-compose.yml</span></div>
<svg class="a" style="left:146px;top:25.5px" width="5" height="5" viewBox="0 0 5 5" stroke="#999" stroke-width="0.7"><path d="M0.5 0.5l4 4M4.5 0.5l-4 4"/></svg>
<div class="a" id="ed">
<div class="a" style="left:482.8px;top:0;width:5.5px;height:366px;background:#f8f8f8"></div>
<div class="a" style="left:15.2px;top:0;width:1px;height:366.5px;background:#e9e9e9"></div>
<div class="a" style="left:16.2px;top:142.2px;width:466.6px;height:9.5px;background:#eef3fc"></div>
<div id="nums">1
2
3
4
5
6
7
8
9
10
11
12
13
14
15
16
17</div>
<div id="code"><div class="ln">version: <span class="s">'3.8'</span></div><div class="ln"> </div><div class="ln">services:</div><div class="ln">  db:</div><div class="ln">    image: mysql:8.<span class="n">0</span></div><div class="ln">    container_name: my_mysql</div><div class="ln">    restart: always</div><div class="ln">    environment:</div><div class="ln">      MYSQL_ROOT_PASSWORD: my_secure_password</div><div class="ln">      MYSQL_DATABASE: my_database</div><div class="ln">    volumes:</div><div class="ln">      <span class="g">#</span> <i>【关键点：这里就是数据持久化】</i></div><div class="ln">      <span class="g">#</span> <i>冒号左边是宿主机目录（<b>./data</b>代表当前目录下的<b>data</b>文件夹）</i></div><div class="ln">      <span class="g">#</span> <i>冒号右边是容器内的默认数据路径</i></div><div class="ln">      - ./data<span>:</span>/var/lib/mysql</div><div class="ln">      - ./config/my.cnf:/etc/mysql/my.<span class="h">cnf</span></div></div>
</div>
<div class="a" style="left:489.5px;top:180.5px;width:7px;height:1.5px;border-top:1.5px dotted #333"></div>
<div class="t" style="top:404.5px;left:-0.5px;font-size:7.8px;"><span style="letter-spacing:-0.30px">Ready</span></div>
<svg class="a" style="left:490px;top:407px" width="7" height="7" viewBox="0 0 7 7" fill="#777"><rect x="5" y="0" width="1" height="1"/><rect x="3" y="2" width="1" height="1"/><rect x="5" y="2" width="1" height="1"/><rect x="1" y="4" width="1" height="1"/><rect x="3" y="4" width="1" height="1"/><rect x="5" y="4" width="1" height="1"/></svg>
</div>
</div>
</body>
</html>
